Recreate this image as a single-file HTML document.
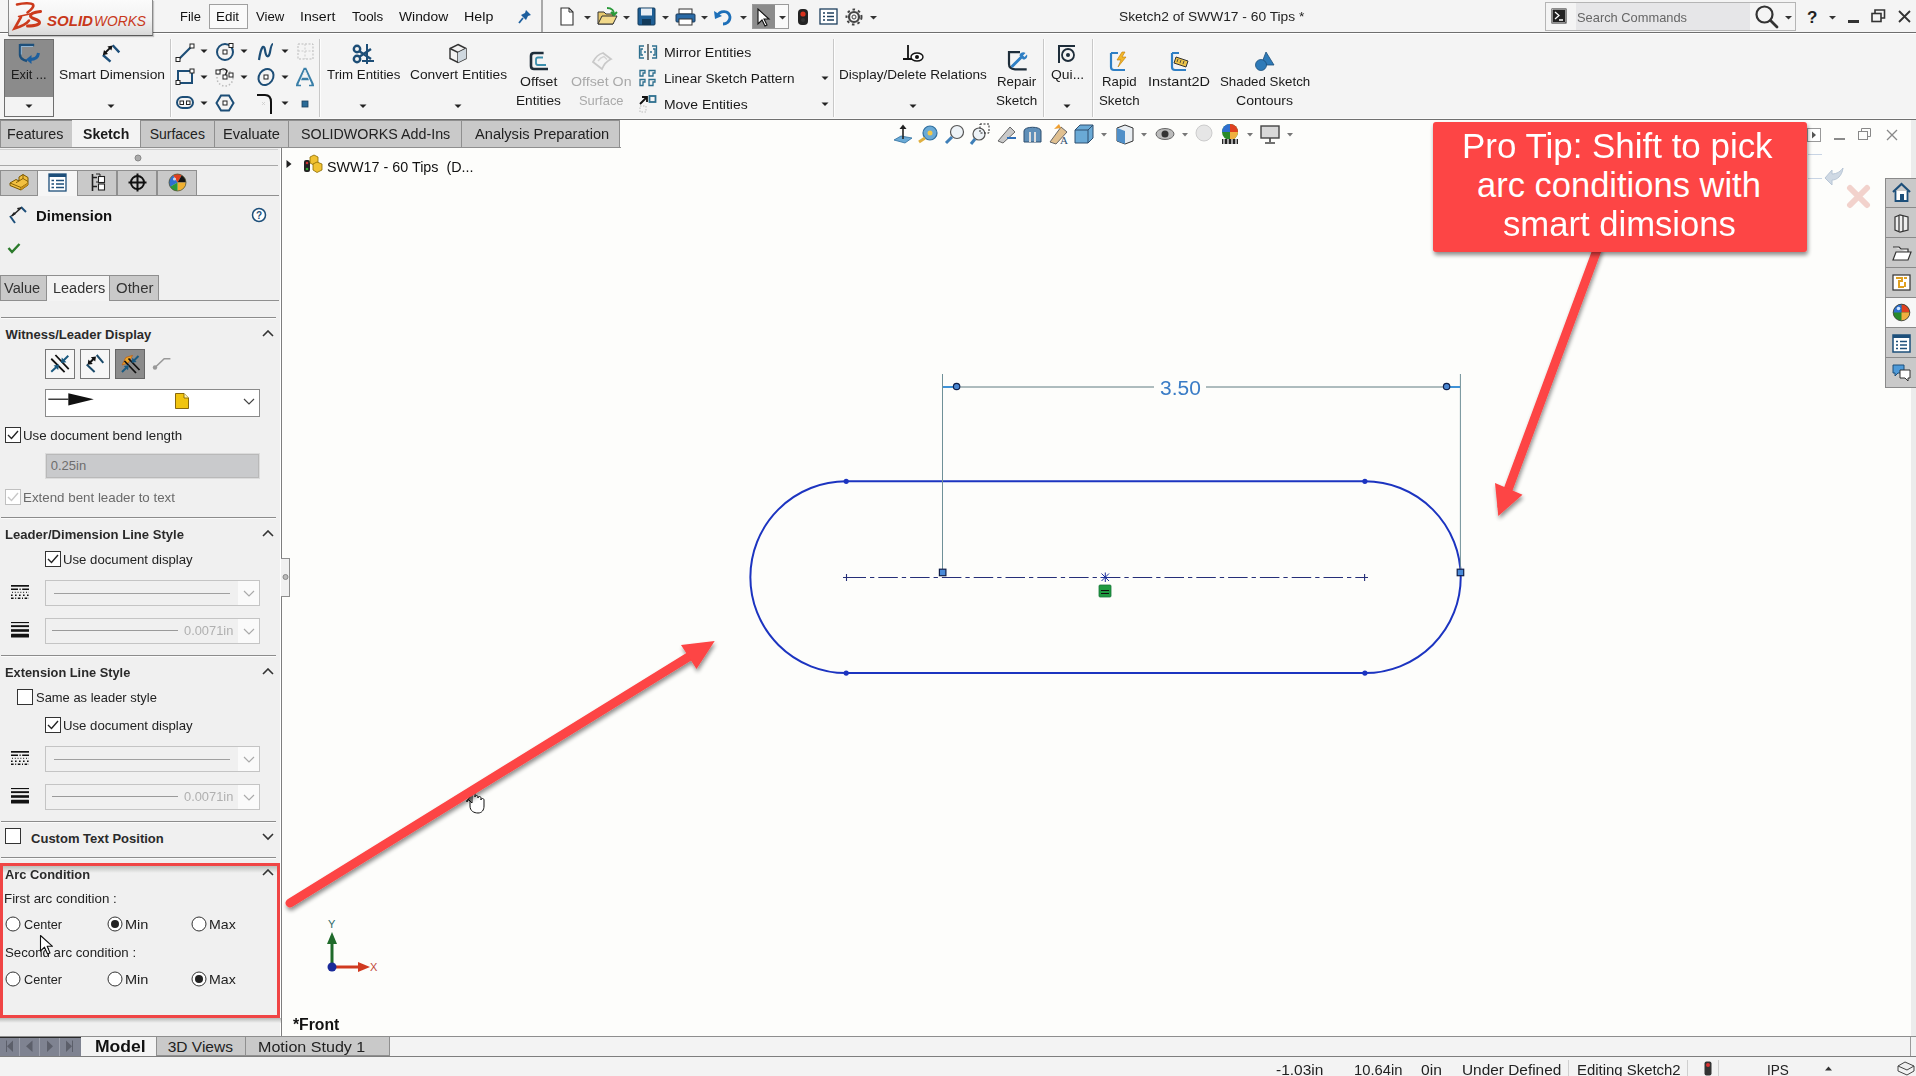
<!DOCTYPE html>
<html><head><meta charset="utf-8"><title>SOLIDWORKS</title>
<style>
html,body{margin:0;padding:0;width:1916px;height:1076px;overflow:hidden;background:#fdfdfb;}
body{position:relative;font-family:"Liberation Sans",sans-serif;}
.a{position:absolute;}
.t{position:absolute;white-space:nowrap;line-height:1;font-family:"Liberation Sans",sans-serif;}
</style></head><body>
<div class="a" style="left:0px;top:0px;width:1916px;height:32px;background:#f4f4f4"></div>
<div class="a" style="left:0px;top:32px;width:1916px;height:1px;background:#6e6e6e"></div>
<div class="a" style="left:0px;top:33px;width:1916px;height:87px;background:#f4f4f4"></div>
<div class="a" style="left:0px;top:33px;width:1916px;height:1px;background:#ffffff"></div>
<div class="a" style="left:0px;top:118px;width:1916px;height:1px;background:#fafafa"></div>
<div class="a" style="left:0px;top:119px;width:1916px;height:1px;background:#707070"></div>
<div class="a" style="left:8px;top:0px;width:145px;height:36px;background:linear-gradient(180deg,#fbfbfb 0%,#f2f2f2 55%,#d9d9d9 100%);border:1px solid #8a8a8a;border-bottom-color:#5a5a5a;border-top:none;box-sizing:border-box;box-shadow:1px 1px 1px rgba(0,0,0,0.2)"></div>
<div class="t" style="left:180.44px;top:10.4px;font-size:13.5px;font-weight:normal;color:#111;transform:scaleX(0.9577);transform-origin:0 0;">File</div>
<div class="t" style="left:256.45px;top:10.4px;font-size:13.5px;font-weight:normal;color:#111;transform:scaleX(0.9759);transform-origin:0 0;">View</div>
<div class="t" style="left:300.20px;top:10.4px;font-size:13.5px;font-weight:normal;color:#111;transform:scaleX(1.0454);transform-origin:0 0;">Insert</div>
<div class="t" style="left:352.21px;top:10.4px;font-size:13.5px;font-weight:normal;color:#111;transform:scaleX(0.9926);transform-origin:0 0;">Tools</div>
<div class="t" style="left:399.44px;top:10.4px;font-size:13.5px;font-weight:normal;color:#111;transform:scaleX(1.0252);transform-origin:0 0;">Window</div>
<div class="t" style="left:464.23px;top:10.4px;font-size:13.5px;font-weight:normal;color:#111;transform:scaleX(1.0571);transform-origin:0 0;">Help</div>
<div class="a" style="left:209px;top:4px;width:39px;height:25px;border:1px solid #a0a0a0;box-sizing:border-box;background:#fafafa"></div>
<div class="t" style="left:216.30px;top:10.4px;font-size:13.5px;font-weight:normal;color:#111;transform:scaleX(0.9928);transform-origin:0 0;">Edit</div>
<div class="a" style="left:541px;top:0px;width:2px;height:32px;background:#a9a9a9"></div>
<div class="t" style="left:1119.38px;top:10.2px;font-size:13.7px;font-weight:normal;color:#222;transform:scaleX(1.0069);transform-origin:0 0;">Sketch2 of SWW17 - 60 Tips *</div>
<div class="a" style="left:1545px;top:2px;width:251px;height:29px;border:1px solid #b5b5b5;box-sizing:border-box;background:#f4f4f4"></div>
<div class="a" style="left:1576px;top:3px;width:174px;height:27px;background:#e6e6e8"></div>
<div class="t" style="left:1577.42px;top:10.8px;font-size:13px;font-weight:normal;color:#666;transform:scaleX(0.9890);transform-origin:0 0;">Search Commands</div>
<div class="a" style="left:4px;top:39px;width:50px;height:78px;background:#f3f3f3;border:1px solid #6e6e6e;box-sizing:border-box"></div>
<div class="a" style="left:5px;top:40px;width:48px;height:57px;background:#8b8b8b"></div>
<svg class="a" style="left:15px;top:40px;" width="30" height="26" viewBox="0 0 30 26"><path d="M5 5 H19.2 M5 4 V15 C5 18 8 20 12 21" fill="none" stroke="#1d4f7a" stroke-width="2.4"/><path d="M6.2 6.5 H18 M6.3 6.5 V14.5" fill="none" stroke="#9cc3e6" stroke-width="0.8"/><path d="M23.5 13 C23 17 20 19.5 15 19.5" fill="none" stroke="#1d5f9e" stroke-width="3"/><path d="M11 19.5 L16.5 15 L16.5 24 Z" fill="#1d5f9e"/></svg>
<div class="t" style="left:11.45px;top:67.8px;font-size:13px;font-weight:normal;color:#1a1a1a;transform:scaleX(0.9833);transform-origin:0 0;">Exit ...</div>
<svg class="a" style="left:25px;top:104px;" width="8" height="5" viewBox="0 0 8 5"><path d="M0.5 0.5 L7.5 0.5 L4 4 Z" fill="#222"/></svg>
<svg class="a" style="left:95px;top:40px;" width="30" height="26" viewBox="0 0 30 26"><path d="M17.7 5.3 L24.3 12.4 M7.9 15 L15.5 21.7" stroke="#1d4f7a" stroke-width="2.4" fill="none"/><path d="M10 13 L15.6 7.4" stroke="#111" stroke-width="1.8"/><path d="M7.8 15.2 L9 10 L13 14 Z M17.6 5.4 L16.4 10.6 L12.4 6.6 Z" fill="#111"/></svg>
<div class="t" style="left:58.58px;top:68.0px;font-size:13px;font-weight:normal;color:#1a1a1a;transform:scaleX(1.0633);transform-origin:0 0;">Smart Dimension</div>
<svg class="a" style="left:107px;top:104px;" width="8" height="5" viewBox="0 0 8 5"><path d="M0.5 0.5 L7.5 0.5 L4 4 Z" fill="#222"/></svg>
<div class="a" style="left:170px;top:39px;width:1px;height:78px;background:#c8c8c8"></div>
<div class="a" style="left:171px;top:39px;width:1px;height:78px;background:#fdfdfd"></div>
<svg class="a" style="left:175px;top:43px;" width="20" height="20" viewBox="0 0 20 20"><path d="M3 17 L17 3" stroke="#1d4e77" stroke-width="2.2"/><rect x="1" y="14.5" width="4" height="4" fill="#fff" stroke="#222" stroke-width="1"/><rect x="15" y="1" width="4" height="4" fill="#fff" stroke="#222" stroke-width="1"/></svg>
<svg class="a" style="left:200px;top:49px;" width="8" height="5" viewBox="0 0 8 5"><path d="M0.5 0.5 L7.5 0.5 L4 4 Z" fill="#222"/></svg>
<svg class="a" style="left:215px;top:42px;" width="20" height="20" viewBox="0 0 20 20"><circle cx="10" cy="10" r="8" fill="none" stroke="#1d4e77" stroke-width="2"/><rect x="8" y="8" width="4" height="4" fill="#fff" stroke="#222"/><rect x="14" y="1.5" width="4" height="4" fill="#fff" stroke="#222"/></svg>
<svg class="a" style="left:240px;top:49px;" width="8" height="5" viewBox="0 0 8 5"><path d="M0.5 0.5 L7.5 0.5 L4 4 Z" fill="#222"/></svg>
<svg class="a" style="left:256px;top:42px;" width="20" height="20" viewBox="0 0 20 20"><path d="M3 18 C5 4 8 2 9 8 C10 16 13 16 14 10 C15 4 16 2 17 2" fill="none" stroke="#1d4e77" stroke-width="2.2"/></svg>
<svg class="a" style="left:280.5px;top:49px;" width="8" height="5" viewBox="0 0 8 5"><path d="M0.5 0.5 L7.5 0.5 L4 4 Z" fill="#222"/></svg>
<svg class="a" style="left:296px;top:42px;" width="19" height="19" viewBox="0 0 19 19"><rect x="2" y="2" width="15" height="15" fill="none" stroke="#bbb" stroke-width="1" stroke-dasharray="2 1.5"/><path d="M9 2 V17 M2 9 H17" stroke="#ccc" stroke-dasharray="2 1.5"/></svg>
<svg class="a" style="left:175px;top:67px;" width="20" height="20" viewBox="0 0 20 20"><rect x="3" y="4" width="14" height="12" fill="none" stroke="#1d4e77" stroke-width="2"/><rect x="1" y="13.5" width="4" height="4" fill="#fff" stroke="#222"/><rect x="15" y="2" width="4" height="4" fill="#fff" stroke="#222"/></svg>
<svg class="a" style="left:200px;top:75px;" width="8" height="5" viewBox="0 0 8 5"><path d="M0.5 0.5 L7.5 0.5 L4 4 Z" fill="#222"/></svg>
<svg class="a" style="left:215px;top:67px;" width="20" height="20" viewBox="0 0 20 20"><circle cx="10" cy="11" r="8" fill="none" stroke="#bbb" stroke-width="1.5" stroke-dasharray="1.5 2"/><path d="M3 5 C6 1 10 1 12 4 L10 9" fill="none" stroke="#222" stroke-width="1.4"/><rect x="1" y="3" width="4" height="4" fill="#fff" stroke="#222"/><rect x="8" y="8" width="4" height="4" fill="#fff" stroke="#222"/><rect x="14" y="6" width="4" height="4" fill="#fff" stroke="#222"/></svg>
<svg class="a" style="left:240px;top:75px;" width="8" height="5" viewBox="0 0 8 5"><path d="M0.5 0.5 L7.5 0.5 L4 4 Z" fill="#222"/></svg>
<svg class="a" style="left:256px;top:67px;" width="20" height="20" viewBox="0 0 20 20"><ellipse cx="10" cy="10" rx="7" ry="8.5" transform="rotate(35 10 10)" fill="none" stroke="#1d4e77" stroke-width="2"/><rect x="8" y="8" width="4" height="4" fill="#fff" stroke="#222"/></svg>
<svg class="a" style="left:280.5px;top:75px;" width="8" height="5" viewBox="0 0 8 5"><path d="M0.5 0.5 L7.5 0.5 L4 4 Z" fill="#222"/></svg>
<svg class="a" style="left:295px;top:66px;" width="20" height="21" viewBox="0 0 20 21"><path d="M10 2 L2 19 M10 2 L18 19 M5 13 H15" fill="none" stroke="#3a7fa8" stroke-width="2.4"/><path d="M10 4 L4 18 M10 4 L16 18" fill="none" stroke="#fff" stroke-width="0.8"/><path d="M1 19.5 H6 M14 19.5 H19" stroke="#3a7fa8" stroke-width="1.4"/></svg>
<svg class="a" style="left:175px;top:94px;" width="20" height="18" viewBox="0 0 20 18"><rect x="2" y="3" width="16" height="11" rx="5.5" fill="none" stroke="#1d4e77" stroke-width="2"/><rect x="5" y="7" width="3.5" height="3.5" fill="#fff" stroke="#222"/><rect x="11.5" y="7" width="3.5" height="3.5" fill="#fff" stroke="#222"/></svg>
<svg class="a" style="left:200px;top:101px;" width="8" height="5" viewBox="0 0 8 5"><path d="M0.5 0.5 L7.5 0.5 L4 4 Z" fill="#222"/></svg>
<svg class="a" style="left:215px;top:93px;" width="20" height="20" viewBox="0 0 20 20"><path d="M6 2.5 H14 L18.5 10 L14 17.5 H6 L1.5 10 Z" fill="none" stroke="#1d4e77" stroke-width="2"/><rect x="8" y="8" width="4" height="4" fill="#fff" stroke="#222"/></svg>
<svg class="a" style="left:256px;top:93px;" width="18" height="22" viewBox="0 0 18 22"><path d="M1 2 H9 C13 2 15 5 15 9 V21" fill="none" stroke="#111" stroke-width="2"/><path d="M6 9 L9 12 M9 9 L6 12" stroke="#ccc" stroke-width="0.8"/></svg>
<svg class="a" style="left:280.5px;top:101px;" width="8" height="5" viewBox="0 0 8 5"><path d="M0.5 0.5 L7.5 0.5 L4 4 Z" fill="#222"/></svg>
<svg class="a" style="left:301px;top:100px;" width="8" height="8" viewBox="0 0 8 8"><rect x="1" y="1" width="6" height="6" fill="#2a6a96" stroke="#1a3f5c" stroke-width="0.8"/></svg>
<div class="a" style="left:319px;top:39px;width:1px;height:78px;background:#c8c8c8"></div>
<div class="a" style="left:320px;top:39px;width:1px;height:78px;background:#fdfdfd"></div>
<svg class="a" style="left:351px;top:43px;" width="24" height="22" viewBox="0 0 24 22"><circle cx="6" cy="6" r="3.2" fill="none" stroke="#1d4e77" stroke-width="2.4"/><circle cx="6" cy="16" r="3.2" fill="none" stroke="#1d4e77" stroke-width="2.4"/><path d="M8 8 L20 16 M8 14 L20 6" stroke="#1d4e77" stroke-width="2.4"/><path d="M16 1 V21 M11 18 H23" stroke="#1d4e77" stroke-width="2"/></svg>
<div class="t" style="left:326.71px;top:68.3px;font-size:13px;font-weight:normal;color:#1a1a1a;transform:scaleX(1.0226);transform-origin:0 0;">Trim Entities</div>
<svg class="a" style="left:359px;top:104px;" width="8" height="5" viewBox="0 0 8 5"><path d="M0.5 0.5 L7.5 0.5 L4 4 Z" fill="#222"/></svg>
<svg class="a" style="left:448px;top:43px;" width="20" height="21" viewBox="0 0 20 21"><path d="M10 1.5 L18 5.5 V15.5 L10 19.5 L2 15.5 V5.5 Z" fill="#f2f2f2" stroke="#333" stroke-width="1.4"/><path d="M2 5.5 L10 9.5 L18 5.5 M10 9.5 V19.5" fill="none" stroke="#333" stroke-width="1.4"/><path d="M10 9.5 L18 5.5 V15.5 L10 19.5 Z" fill="#cfd8df"/></svg>
<div class="t" style="left:410.11px;top:68.3px;font-size:13px;font-weight:normal;color:#1a1a1a;transform:scaleX(1.0579);transform-origin:0 0;">Convert Entities</div>
<svg class="a" style="left:454px;top:104px;" width="8" height="5" viewBox="0 0 8 5"><path d="M0.5 0.5 L7.5 0.5 L4 4 Z" fill="#222"/></svg>
<svg class="a" style="left:528px;top:50px;" width="22" height="22" viewBox="0 0 22 22"><path d="M15.6 3 H6 Q3 3 3 6 V16 Q3 19 6 19 H20" fill="none" stroke="#1e2d3a" stroke-width="2.6"/><path d="M15 7.5 H10 Q8 7.5 8 9.5 V13 Q8 15 10 15 H18" fill="none" stroke="#3b8fae" stroke-width="1.8"/></svg>
<div class="t" style="left:519.74px;top:74.5px;font-size:13px;font-weight:normal;color:#1a1a1a;transform:scaleX(1.0845);transform-origin:0 0;">Offset</div>
<div class="t" style="left:516.48px;top:93.8px;font-size:13px;font-weight:normal;color:#1a1a1a;transform:scaleX(1.0513);transform-origin:0 0;">Entities</div>
<svg class="a" style="left:590px;top:50px;" width="24" height="22" viewBox="0 0 24 22"><path d="M3 12 C5 8 9 4 13 3 L21 9 C17 11 14 14 12 19 Z" fill="none" stroke="#c9c9c9" stroke-width="1.8"/><path d="M8 11 C10 8 12 7 14 6.5 L17 9.5" fill="none" stroke="#d4d4d4" stroke-width="1.4"/></svg>
<div class="t" style="left:570.83px;top:74.5px;font-size:13px;font-weight:normal;color:#a9a9a9;transform:scaleX(1.0936);transform-origin:0 0;">Offset On</div>
<div class="t" style="left:579.02px;top:93.8px;font-size:13px;font-weight:normal;color:#a9a9a9;transform:scaleX(0.9945);transform-origin:0 0;">Surface</div>
<svg class="a" style="left:638px;top:44px;" width="20" height="16" viewBox="0 0 20 16"><path d="M6 2 H1.5 V14 H6 M5 5 H3 V11 H5" fill="none" stroke="#2d6f8e" stroke-width="1.3"/><path d="M14 2 H18.5 V14 H14 M15 5 H17 V11 H15" fill="none" stroke="#2d6f8e" stroke-width="1.3"/><path d="M10 0 V16" stroke="#222" stroke-width="1.2"/><path d="M6 8 H8 M12 8 H14" stroke="#2d6f8e" stroke-width="1.3"/></svg>
<div class="t" style="left:663.84px;top:45.9px;font-size:13px;font-weight:normal;color:#1a1a1a;transform:scaleX(1.0884);transform-origin:0 0;">Mirror Entities</div>
<svg class="a" style="left:638px;top:69px;" width="20" height="18" viewBox="0 0 20 18"><path d="M2 1.5 H7 V4 H5 V7 H2 Z M11 1.5 H17 V4 H15 V7 H11 Z M2 10.5 H7 V13 H5 V16.5 H2 Z M11 10.5 H17 V13 H15 V16.5 H11 Z" fill="none" stroke="#2d6f8e" stroke-width="1.3"/></svg>
<div class="t" style="left:663.89px;top:72.0px;font-size:13px;font-weight:normal;color:#1a1a1a;transform:scaleX(1.0437);transform-origin:0 0;">Linear Sketch Pattern</div>
<svg class="a" style="left:821px;top:75.5px;" width="8" height="5" viewBox="0 0 8 5"><path d="M0.5 0.5 L7.5 0.5 L4 4 Z" fill="#222"/></svg>
<svg class="a" style="left:638px;top:94px;" width="20" height="20" viewBox="0 0 20 20"><path d="M2 10 L8 4 M4 3 H9 V8" fill="none" stroke="#111" stroke-width="1.8"/><rect x="11.5" y="2" width="6" height="6" fill="none" stroke="#2d6f8e" stroke-width="1.8"/><rect x="2" y="12" width="6" height="6" fill="none" stroke="#bbb" stroke-width="1" stroke-dasharray="1.5 1.5"/></svg>
<div class="t" style="left:663.86px;top:97.6px;font-size:13px;font-weight:normal;color:#1a1a1a;transform:scaleX(1.0720);transform-origin:0 0;">Move Entities</div>
<svg class="a" style="left:821px;top:101.5px;" width="8" height="5" viewBox="0 0 8 5"><path d="M0.5 0.5 L7.5 0.5 L4 4 Z" fill="#222"/></svg>
<div class="a" style="left:833px;top:39px;width:1px;height:78px;background:#c8c8c8"></div>
<div class="a" style="left:834px;top:39px;width:1px;height:78px;background:#fdfdfd"></div>
<svg class="a" style="left:902px;top:44px;" width="22" height="20" viewBox="0 0 22 20"><path d="M6 1 V15 M1 15 H11" stroke="#111" stroke-width="1.8"/><ellipse cx="15" cy="13" rx="6" ry="4" fill="#fff" stroke="#111" stroke-width="1.4"/><circle cx="15" cy="13" r="2" fill="#111"/></svg>
<div class="t" style="left:839.29px;top:68.0px;font-size:13px;font-weight:normal;color:#1a1a1a;transform:scaleX(1.0436);transform-origin:0 0;">Display/Delete Relations</div>
<svg class="a" style="left:909px;top:104px;" width="8" height="5" viewBox="0 0 8 5"><path d="M0.5 0.5 L7.5 0.5 L4 4 Z" fill="#222"/></svg>
<svg class="a" style="left:1006px;top:50px;" width="22" height="22" viewBox="0 0 22 22"><path d="M14 2.2 H3 V14 Q3 19 9 19.3 H20.7" fill="none" stroke="#1e2d3a" stroke-width="2.2"/><path d="M6.5 16 L15.5 7" stroke="#2f7fc4" stroke-width="3" stroke-linecap="round"/><path d="M13.5 5.5 C14 2.5 17.5 1.5 19.5 3 L17 5.5 L18.5 7 L21 4.5 C22 7 20 10 17 9.5 Z" fill="#2f7fc4"/></svg>
<div class="t" style="left:997.21px;top:75.0px;font-size:13px;font-weight:normal;color:#1a1a1a;transform:scaleX(1.0237);transform-origin:0 0;">Repair</div>
<div class="t" style="left:996.39px;top:94.0px;font-size:13px;font-weight:normal;color:#1a1a1a;transform:scaleX(1.0359);transform-origin:0 0;">Sketch</div>
<div class="a" style="left:1043px;top:39px;width:1px;height:78px;background:#c8c8c8"></div>
<div class="a" style="left:1044px;top:39px;width:1px;height:78px;background:#fdfdfd"></div>
<svg class="a" style="left:1057px;top:44px;" width="20" height="20" viewBox="0 0 20 20"><path d="M2 19 V2 H18" fill="none" stroke="#1e2d3a" stroke-width="2"/><circle cx="11" cy="11" r="6" fill="none" stroke="#1e2d3a" stroke-width="1.8"/><circle cx="11" cy="11" r="2" fill="#1e2d3a"/></svg>
<div class="t" style="left:1051.15px;top:68.0px;font-size:13px;font-weight:normal;color:#1a1a1a;transform:scaleX(1.0691);transform-origin:0 0;">Qui...</div>
<svg class="a" style="left:1063px;top:104px;" width="8" height="5" viewBox="0 0 8 5"><path d="M0.5 0.5 L7.5 0.5 L4 4 Z" fill="#222"/></svg>
<div class="a" style="left:1092px;top:39px;width:1px;height:78px;background:#c8c8c8"></div>
<div class="a" style="left:1093px;top:39px;width:1px;height:78px;background:#fdfdfd"></div>
<svg class="a" style="left:1108px;top:50px;" width="22" height="22" viewBox="0 0 22 22"><path d="M3 3 V17 C3 19 4 20 6 20 H17" fill="none" stroke="#2f7fc4" stroke-width="2.2"/><path d="M3 3 H10" stroke="#2f7fc4" stroke-width="2"/><path d="M14 2 L9 10 H13 L10 17 L18 7 H14 L17 2 Z" fill="#f2b72b" stroke="#c07a00" stroke-width="0.6"/></svg>
<div class="t" style="left:1101.62px;top:75.0px;font-size:13px;font-weight:normal;color:#1a1a1a;transform:scaleX(1.0165);transform-origin:0 0;">Rapid</div>
<div class="t" style="left:1098.70px;top:94.0px;font-size:13px;font-weight:normal;color:#1a1a1a;transform:scaleX(1.0229);transform-origin:0 0;">Sketch</div>
<svg class="a" style="left:1169px;top:50px;" width="22" height="22" viewBox="0 0 22 22"><path d="M3 3 V17 C3 19 4 20 6 20 H17" fill="none" stroke="#2f7fc4" stroke-width="2.2"/><path d="M3 3 H10" stroke="#2f7fc4" stroke-width="2"/><path d="M7 7 L19 11 L17 17 L5 13 Z" fill="#e9c24a" stroke="#333" stroke-width="1"/><path d="M9 9 L8 12 M12 10 L11 13 M15 11 L14 14" stroke="#333" stroke-width="0.8"/></svg>
<div class="t" style="left:1148.37px;top:75.0px;font-size:13px;font-weight:normal;color:#1a1a1a;transform:scaleX(1.1146);transform-origin:0 0;">Instant2D</div>
<svg class="a" style="left:1253px;top:50px;" width="22" height="22" viewBox="0 0 22 22"><path d="M13 2 L21 15 H8 Z" fill="#2e7ab8" stroke="#1d4f7a" stroke-width="0.8"/><circle cx="8" cy="15" r="5.5" fill="#2e7ab8" stroke="#1d4f7a" stroke-width="0.8"/></svg>
<div class="t" style="left:1219.50px;top:75.0px;font-size:13px;font-weight:normal;color:#1a1a1a;transform:scaleX(1.0235);transform-origin:0 0;">Shaded Sketch</div>
<div class="t" style="left:1235.90px;top:94.0px;font-size:13px;font-weight:normal;color:#1a1a1a;transform:scaleX(1.0806);transform-origin:0 0;">Contours</div>
<div class="a" style="left:0px;top:120px;width:281px;height:28px;background:#f0f0f0"></div>
<div class="a" style="left:0px;top:120px;width:73px;height:28px;background:#c9c9c9;border:1px solid #8f8f8f;box-sizing:border-box;"></div>
<div class="t" style="left:7.13px;top:127.0px;font-size:14px;font-weight:normal;color:#222;transform:scaleX(1.0207);transform-origin:0 0;">Features</div>
<div class="a" style="left:72px;top:120px;width:68px;height:28px;background:#f3f3f3"></div>
<div class="t" style="left:83.10px;top:127.0px;font-size:14px;font-weight:bold;color:#1a1a1a;transform:scaleX(1.0079);transform-origin:0 0;">Sketch</div>
<div class="a" style="left:140px;top:120px;width:75px;height:28px;background:#c9c9c9;border:1px solid #8f8f8f;box-sizing:border-box;"></div>
<div class="t" style="left:149.67px;top:127.0px;font-size:14px;font-weight:normal;color:#222;">Surfaces</div>
<div class="a" style="left:214px;top:120px;width:75px;height:28px;background:#c9c9c9;border:1px solid #8f8f8f;box-sizing:border-box;"></div>
<div class="t" style="left:223.30px;top:127.0px;font-size:14px;font-weight:normal;color:#222;transform:scaleX(1.0453);transform-origin:0 0;">Evaluate</div>
<div class="a" style="left:288px;top:120px;width:174px;height:28px;background:#c9c9c9;border:1px solid #8f8f8f;box-sizing:border-box;"></div>
<div class="t" style="left:300.66px;top:127.0px;font-size:14px;font-weight:normal;color:#222;transform:scaleX(1.0204);transform-origin:0 0;">SOLIDWORKS Add-Ins</div>
<div class="a" style="left:461px;top:120px;width:159px;height:28px;background:#c9c9c9;border:1px solid #8f8f8f;box-sizing:border-box;"></div>
<div class="t" style="left:474.67px;top:127.0px;font-size:14px;font-weight:normal;color:#222;transform:scaleX(1.0450);transform-origin:0 0;">Analysis Preparation</div>
<div class="a" style="left:0px;top:147px;width:281px;height:1px;background:#8f8f8f"></div>
<div class="a" style="left:140px;top:147px;width:481px;height:1px;background:#8f8f8f"></div>
<div class="a" style="left:0px;top:148px;width:281px;height:888px;background:#f0f0f0"></div>
<div class="a" style="left:281px;top:148px;width:1px;height:888px;background:#7e7e7e"></div>
<div class="a" style="left:280px;top:148px;width:1px;height:888px;background:#ffffff"></div>
<div class="a" style="left:281px;top:558px;width:9px;height:39px;background:#f0f0f0;border:1px solid #8e8e8e;border-left:none;box-sizing:border-box"></div>
<svg class="a" style="left:282px;top:573px;" width="7" height="8" viewBox="0 0 7 8"><circle cx="3.5" cy="4" r="2.5" fill="#bbb" stroke="#888" stroke-width="1"/></svg>
<div class="a" style="left:0px;top:149px;width:278px;height:1px;background:#d0d0d0"></div>
<svg class="a" style="left:134px;top:154px;" width="8" height="8" viewBox="0 0 8 8"><circle cx="4" cy="4" r="3" fill="#aaa" stroke="#888" stroke-width="1"/></svg>
<div class="a" style="left:0px;top:165px;width:278px;height:1px;background:#a8a8a8"></div>
<div class="a" style="left:0px;top:170px;width:38px;height:26px;background:#c9c9c9;border:1px solid #8f8f8f;box-sizing:border-box"></div>
<div class="a" style="left:37px;top:170px;width:41px;height:26px;background:#f6f6f6;border:1px solid #8f8f8f;border-bottom:none;box-sizing:border-box"></div>
<div class="a" style="left:77px;top:170px;width:40px;height:26px;background:#c9c9c9;border:1px solid #8f8f8f;box-sizing:border-box"></div>
<div class="a" style="left:117px;top:170px;width:40px;height:26px;background:#c9c9c9;border:1px solid #8f8f8f;box-sizing:border-box"></div>
<div class="a" style="left:157px;top:170px;width:40px;height:26px;background:#c9c9c9;border:1px solid #8f8f8f;box-sizing:border-box"></div>
<div class="a" style="left:0px;top:195px;width:38px;height:1px;background:#8f8f8f"></div>
<div class="a" style="left:197px;top:195px;width:82px;height:1px;background:#8f8f8f"></div>
<svg class="a" style="left:8px;top:205px;" width="20" height="20" viewBox="0 0 20 20"><path d="M2 11 L7 18" stroke="#1d4f7a" stroke-width="2" fill="none"/><path d="M13 2 L18 7" stroke="#1d4f7a" stroke-width="2" fill="none"/><path d="M4 11 L13 3" stroke="#222" stroke-width="1.5"/><path d="M2 12 L8 9 L6 7 Z M14 2 L10 5 L9 3 Z" fill="#222"/></svg>
<div class="t" style="left:35.62px;top:208.7px;font-size:14.5px;font-weight:bold;color:#111;transform:scaleX(1.0281);transform-origin:0 0;">Dimension</div>
<svg class="a" style="left:251px;top:207px;" width="16" height="16" viewBox="0 0 16 16"><circle cx="8" cy="8" r="6.5" fill="#fff" stroke="#1d4f7a" stroke-width="1.5"/><text x="8" y="12" font-size="10" font-weight="bold" text-anchor="middle" fill="#1d4f7a" font-family="Liberation Sans">?</text></svg>
<svg class="a" style="left:7px;top:242px;" width="14" height="12" viewBox="0 0 14 12"><path d="M1.5 6 L5 10 L12.5 2" fill="none" stroke="#2b7a2b" stroke-width="2.4"/></svg>
<div class="a" style="left:0px;top:275px;width:47px;height:26px;background:#c9c9c9;border:1px solid #8f8f8f;box-sizing:border-box"></div>
<div class="a" style="left:46px;top:275px;width:64px;height:26px;background:#f3f3f3;border:1px solid #8f8f8f;border-bottom:none;box-sizing:border-box"></div>
<div class="a" style="left:109px;top:275px;width:50px;height:26px;background:#c9c9c9;border:1px solid #8f8f8f;box-sizing:border-box"></div>
<div class="t" style="left:3.94px;top:280.9px;font-size:14px;font-weight:normal;color:#333;transform:scaleX(1.0414);transform-origin:0 0;">Value</div>
<div class="t" style="left:52.51px;top:280.9px;font-size:14px;font-weight:normal;color:#333;transform:scaleX(1.0338);transform-origin:0 0;">Leaders</div>
<div class="t" style="left:115.70px;top:280.9px;font-size:14px;font-weight:normal;color:#333;transform:scaleX(1.0694);transform-origin:0 0;">Other</div>
<div class="a" style="left:158px;top:300px;width:121px;height:1px;background:#8f8f8f"></div>
<div class="a" style="left:1px;top:317px;width:275px;height:1px;background:#8c8c8c"></div>
<div class="a" style="left:1px;top:318px;width:275px;height:1px;background:#fbfbfb"></div>
<div class="t" style="left:5.49px;top:327.7px;font-size:13px;font-weight:bold;color:#2a2a2a;">Witness/Leader Display</div>
<svg class="a" style="left:262px;top:330px;" width="12" height="8" viewBox="0 0 12 8"><path d="M1 6 L6 1 L11 6" fill="none" stroke="#333" stroke-width="1.6"/></svg>
<div class="a" style="left:45px;top:349px;width:30px;height:30px;background:#f6f6f6;border:1px solid #777;box-sizing:border-box"></div>
<div class="a" style="left:80px;top:349px;width:30px;height:30px;background:#f6f6f6;border:1px solid #777;box-sizing:border-box"></div>
<div class="a" style="left:115px;top:349px;width:30px;height:30px;background:#8b8b8b;border:1px solid #666;box-sizing:border-box"></div>
<svg class="a" style="left:45px;top:349px;" width="30" height="30" viewBox="0 0 30 30"><path d="M6.25 9.75 L19.6 23.1 M10.4 6 L23.75 20.2" stroke="#111" stroke-width="1.8"/><path d="M23.3 6.8 L18 12 M6.25 22.7 L12 17.4" stroke="#1a5a80" stroke-width="2"/><path d="M16 14 L16.8 8.6 L21.4 13.2 Z M14 15.6 L13.2 21 L8.6 16.4 Z" fill="#1a5a80"/></svg>
<svg class="a" style="left:80px;top:349px;" width="30" height="30" viewBox="0 0 30 30"><path d="M16.7 6 L23.3 13.9 M6.7 15.6 L14.6 23.1" stroke="#1a4a6a" stroke-width="2" fill="none"/><path d="M10 13.5 L13.7 9.8" stroke="#111" stroke-width="2"/><path d="M7.6 15.8 L8.4 10.6 L12.8 15 Z M16 7.4 L15.2 12.6 L10.8 8.2 Z" fill="#111"/></svg>
<svg class="a" style="left:115px;top:349px;" width="30" height="30" viewBox="0 0 30 30"><path d="M7.1 16 L10.8 8.5 L17.5 6.4 L13.3 13.9 Z" fill="#f0a828" stroke="#c06010" stroke-width="0.8"/><path d="M9.5 12 L21 24 M13.5 9.5 L24.5 21" stroke="#111" stroke-width="1.8"/><path d="M23.5 7 L18.5 12 M7 23 L12 18" stroke="#1a5a80" stroke-width="2"/><path d="M16.6 13.8 L17.4 8.8 L21.6 13 Z M13.8 16.2 L13 21.2 L8.8 17 Z" fill="#1a5a80"/></svg>
<svg class="a" style="left:150px;top:354px;" width="24" height="18" viewBox="0 0 24 18"><path d="M5 13.5 L14.2 4.75 H20.4" fill="none" stroke="#999" stroke-width="1.6"/><circle cx="5" cy="13.5" r="2.2" fill="#999"/></svg>
<div class="a" style="left:45px;top:389px;width:215px;height:28px;background:#fff;border:1px solid #8a8a8a;box-sizing:border-box"></div>
<svg class="a" style="left:46px;top:391px;" width="50" height="16" viewBox="0 0 50 16"><path d="M2.3 8.2 H22.5" stroke="#111" stroke-width="1.2"/><path d="M22.3 2.3 L47.8 8.2 L22.3 14.4 Z" fill="#111"/></svg>
<svg class="a" style="left:174px;top:393px;" width="16" height="16" viewBox="0 0 16 16"><path d="M1.5 0.5 H10 L14.5 5 V15.5 H1.5 Z" fill="#f1c40f" stroke="#7a5a00" stroke-width="0.9"/><path d="M10 0.5 V5 H14.5" fill="#fff6b0" stroke="#7a5a00" stroke-width="0.8"/></svg>
<svg class="a" style="left:243px;top:398px;" width="12" height="8" viewBox="0 0 12 8"><path d="M1 1 L6 6 L11 1" fill="none" stroke="#444" stroke-width="1.2"/></svg>
<svg class="a" style="left:5px;top:427px;" width="16" height="16" viewBox="0 0 16 16"><rect x="0.5" y="0.5" width="15" height="15" fill="#fff" stroke="#333" stroke-width="1"/><path d="M3 8 L6.5 11.5 L13 4" fill="none" stroke="#222" stroke-width="1.4"/></svg>
<div class="t" style="left:23.48px;top:428.8px;font-size:13px;font-weight:normal;color:#222;transform:scaleX(1.0237);transform-origin:0 0;">Use document bend length</div>
<div class="a" style="left:45px;top:453px;width:215px;height:26px;background:#c9cacc;border:1px solid #dcdcdc;box-sizing:border-box;box-shadow:inset 0 0 0 1px #b9b9b9"></div>
<div class="t" style="left:50.79px;top:459.0px;font-size:13px;font-weight:normal;color:#6d6d6d;">0.25in</div>
<svg class="a" style="left:5px;top:489px;" width="16" height="16" viewBox="0 0 16 16"><rect x="0.5" y="0.5" width="15" height="15" fill="#fff" stroke="#c0c0c0" stroke-width="1"/><path d="M3 8 L6.5 11.5 L13 4" fill="none" stroke="#c8c8c8" stroke-width="1.4"/></svg>
<div class="t" style="left:23.41px;top:491.0px;font-size:13px;font-weight:normal;color:#6a6a6a;transform:scaleX(1.0258);transform-origin:0 0;">Extend bent leader to text</div>
<div class="a" style="left:1px;top:517px;width:275px;height:1px;background:#8c8c8c"></div>
<div class="a" style="left:1px;top:518px;width:275px;height:1px;background:#fbfbfb"></div>
<div class="t" style="left:4.64px;top:527.9px;font-size:13px;font-weight:bold;color:#2a2a2a;transform:scaleX(1.0073);transform-origin:0 0;">Leader/Dimension Line Style</div>
<svg class="a" style="left:262px;top:530px;" width="12" height="8" viewBox="0 0 12 8"><path d="M1 6 L6 1 L11 6" fill="none" stroke="#333" stroke-width="1.6"/></svg>
<svg class="a" style="left:45px;top:551px;" width="16" height="16" viewBox="0 0 16 16"><rect x="0.5" y="0.5" width="15" height="15" fill="#fff" stroke="#333" stroke-width="1"/><path d="M3 8 L6.5 11.5 L13 4" fill="none" stroke="#222" stroke-width="1.4"/></svg>
<div class="t" style="left:63.39px;top:553.0px;font-size:13px;font-weight:normal;color:#222;transform:scaleX(1.0137);transform-origin:0 0;">Use document display</div>
<svg class="a" style="left:11px;top:585px;" width="19" height="15" viewBox="0 0 19 15"><rect x="0" y="0" width="18" height="1.7" fill="#111"/><path d="M0 4.3 H18" stroke="#111" stroke-width="1.6" stroke-dasharray="7 1.5 1.2 1.5"/><path d="M1 7.3 H18" stroke="#222" stroke-width="1.2" stroke-dasharray="0.9 1.9"/><path d="M0 10.3 H18" stroke="#111" stroke-width="1.6" stroke-dasharray="1.6 2.4"/><path d="M0 13.3 H18" stroke="#111" stroke-width="1.6" stroke-dasharray="2.6 1.6 1 1.6"/></svg>
<div class="a" style="left:45px;top:580px;width:215px;height:26px;background:#f0f0f0;border:1px solid #c4c4c4;box-sizing:border-box"></div>
<div class="a" style="left:238px;top:581px;width:21px;height:24px;background:#fafafa"></div>
<div class="a" style="left:54px;top:593px;width:176px;height:1px;background:#a0a0a0"></div>
<svg class="a" style="left:243px;top:590px;" width="12" height="8" viewBox="0 0 12 8"><path d="M1 1 L6 6 L11 1" fill="none" stroke="#aaa" stroke-width="1.2"/></svg>
<svg class="a" style="left:11px;top:622px;" width="19" height="16" viewBox="0 0 19 16"><rect x="0" y="0" width="18" height="1.1" fill="#111"/><rect x="0" y="3.2" width="18" height="1.9" fill="#111"/><rect x="0" y="7.2" width="18" height="2.6" fill="#111"/><rect x="0" y="11.8" width="18" height="3.6" rx="0.5" fill="#111"/></svg>
<div class="a" style="left:45px;top:618px;width:215px;height:26px;background:#f0f0f0;border:1px solid #c4c4c4;box-sizing:border-box"></div>
<div class="a" style="left:238px;top:619px;width:21px;height:24px;background:#fafafa"></div>
<div class="a" style="left:52px;top:630px;width:126px;height:1px;background:#9a9a9a"></div>
<div class="t" style="left:183.50px;top:625.4px;font-size:12.5px;font-weight:normal;color:#b0b0b0;transform:scaleX(1.0284);transform-origin:0 0;">0.0071in</div>
<svg class="a" style="left:243px;top:628px;" width="12" height="8" viewBox="0 0 12 8"><path d="M1 1 L6 6 L11 1" fill="none" stroke="#aaa" stroke-width="1.2"/></svg>
<div class="a" style="left:1px;top:655px;width:275px;height:1px;background:#8c8c8c"></div>
<div class="a" style="left:1px;top:656px;width:275px;height:1px;background:#fbfbfb"></div>
<div class="t" style="left:4.65px;top:666.0px;font-size:13px;font-weight:bold;color:#2a2a2a;transform:scaleX(0.9854);transform-origin:0 0;">Extension Line Style</div>
<svg class="a" style="left:262px;top:668px;" width="12" height="8" viewBox="0 0 12 8"><path d="M1 6 L6 1 L11 6" fill="none" stroke="#333" stroke-width="1.6"/></svg>
<svg class="a" style="left:17px;top:689px;" width="16" height="16" viewBox="0 0 16 16"><rect x="0.5" y="0.5" width="15" height="15" fill="#fff" stroke="#333" stroke-width="1"/></svg>
<div class="t" style="left:35.72px;top:691.0px;font-size:13px;font-weight:normal;color:#222;transform:scaleX(0.9955);transform-origin:0 0;">Same as leader style</div>
<svg class="a" style="left:45px;top:717px;" width="16" height="16" viewBox="0 0 16 16"><rect x="0.5" y="0.5" width="15" height="15" fill="#fff" stroke="#333" stroke-width="1"/><path d="M3 8 L6.5 11.5 L13 4" fill="none" stroke="#222" stroke-width="1.4"/></svg>
<div class="t" style="left:63.39px;top:719.0px;font-size:13px;font-weight:normal;color:#222;transform:scaleX(1.0137);transform-origin:0 0;">Use document display</div>
<svg class="a" style="left:11px;top:751px;" width="19" height="15" viewBox="0 0 19 15"><rect x="0" y="0" width="18" height="1.7" fill="#111"/><path d="M0 4.3 H18" stroke="#111" stroke-width="1.6" stroke-dasharray="7 1.5 1.2 1.5"/><path d="M1 7.3 H18" stroke="#222" stroke-width="1.2" stroke-dasharray="0.9 1.9"/><path d="M0 10.3 H18" stroke="#111" stroke-width="1.6" stroke-dasharray="1.6 2.4"/><path d="M0 13.3 H18" stroke="#111" stroke-width="1.6" stroke-dasharray="2.6 1.6 1 1.6"/></svg>
<div class="a" style="left:45px;top:746px;width:215px;height:26px;background:#f0f0f0;border:1px solid #c4c4c4;box-sizing:border-box"></div>
<div class="a" style="left:238px;top:747px;width:21px;height:24px;background:#fafafa"></div>
<div class="a" style="left:54px;top:759px;width:176px;height:1px;background:#a0a0a0"></div>
<svg class="a" style="left:243px;top:756px;" width="12" height="8" viewBox="0 0 12 8"><path d="M1 1 L6 6 L11 1" fill="none" stroke="#aaa" stroke-width="1.2"/></svg>
<svg class="a" style="left:11px;top:788px;" width="19" height="16" viewBox="0 0 19 16"><rect x="0" y="0" width="18" height="1.1" fill="#111"/><rect x="0" y="3.2" width="18" height="1.9" fill="#111"/><rect x="0" y="7.2" width="18" height="2.6" fill="#111"/><rect x="0" y="11.8" width="18" height="3.6" rx="0.5" fill="#111"/></svg>
<div class="a" style="left:45px;top:784px;width:215px;height:26px;background:#f0f0f0;border:1px solid #c4c4c4;box-sizing:border-box"></div>
<div class="a" style="left:238px;top:785px;width:21px;height:24px;background:#fafafa"></div>
<div class="a" style="left:52px;top:796px;width:126px;height:1px;background:#9a9a9a"></div>
<div class="t" style="left:183.50px;top:791.4px;font-size:12.5px;font-weight:normal;color:#b0b0b0;transform:scaleX(1.0284);transform-origin:0 0;">0.0071in</div>
<svg class="a" style="left:243px;top:794px;" width="12" height="8" viewBox="0 0 12 8"><path d="M1 1 L6 6 L11 1" fill="none" stroke="#aaa" stroke-width="1.2"/></svg>
<div class="a" style="left:1px;top:821px;width:275px;height:1px;background:#8c8c8c"></div>
<div class="a" style="left:1px;top:822px;width:275px;height:1px;background:#fbfbfb"></div>
<svg class="a" style="left:5px;top:828px;" width="16" height="16" viewBox="0 0 16 16"><rect x="0.5" y="0.5" width="15" height="15" fill="#fff" stroke="#333" stroke-width="1"/></svg>
<div class="t" style="left:31.07px;top:832.0px;font-size:13px;font-weight:bold;color:#2a2a2a;">Custom Text Position</div>
<svg class="a" style="left:262px;top:833px;" width="12" height="8" viewBox="0 0 12 8"><path d="M1 1 L6 6 L11 1" fill="none" stroke="#333" stroke-width="1.6"/></svg>
<div class="a" style="left:1px;top:857px;width:275px;height:1px;background:#8c8c8c"></div>
<div class="a" style="left:1px;top:858px;width:275px;height:1px;background:#fbfbfb"></div>
<div class="a" style="left:0px;top:866px;width:277px;height:152px;background:#f0f0f0"></div>
<div class="a" style="left:0px;top:1018px;width:281px;height:5px;background:linear-gradient(#b8bab8,#e6e6e6 80%,#f0f0f0)"></div>
<div class="a" style="left:3px;top:866px;width:274px;height:7px;background:linear-gradient(#bcc0bc,#f0f0f0)"></div>
<div class="a" style="left:0px;top:863px;width:280px;height:155px;border:3px solid #f04545;box-sizing:border-box"></div>
<div class="t" style="left:5.19px;top:867.8px;font-size:13px;font-weight:bold;color:#2a2a2a;transform:scaleX(0.9903);transform-origin:0 0;">Arc Condition</div>
<svg class="a" style="left:262px;top:869px;" width="12" height="8" viewBox="0 0 12 8"><path d="M1 6 L6 1 L11 6" fill="none" stroke="#333" stroke-width="1.6"/></svg>
<div class="t" style="left:4.40px;top:892.0px;font-size:13px;font-weight:normal;color:#222;transform:scaleX(1.0273);transform-origin:0 0;">First arc condition :</div>
<svg class="a" style="left:5px;top:916px;" width="16" height="16" viewBox="0 0 16 16"><circle cx="8" cy="8" r="7" fill="#fff" stroke="#333" stroke-width="1"/></svg>
<div class="t" style="left:23.87px;top:918.0px;font-size:13px;font-weight:normal;color:#222;transform:scaleX(0.9750);transform-origin:0 0;">Center</div>
<svg class="a" style="left:107px;top:916px;" width="16" height="16" viewBox="0 0 16 16"><circle cx="8" cy="8" r="7" fill="#fff" stroke="#333" stroke-width="1"/><circle cx="8" cy="8" r="4" fill="#222"/></svg>
<div class="t" style="left:125.21px;top:918.0px;font-size:13px;font-weight:normal;color:#222;transform:scaleX(1.1184);transform-origin:0 0;">Min</div>
<svg class="a" style="left:191px;top:916px;" width="16" height="16" viewBox="0 0 16 16"><circle cx="8" cy="8" r="7" fill="#fff" stroke="#333" stroke-width="1"/></svg>
<div class="t" style="left:208.84px;top:918.0px;font-size:13px;font-weight:normal;color:#222;transform:scaleX(1.0873);transform-origin:0 0;">Max</div>
<div class="t" style="left:4.90px;top:946.4px;font-size:13px;font-weight:normal;color:#222;transform:scaleX(1.0192);transform-origin:0 0;">Second arc condition :</div>
<svg class="a" style="left:5px;top:971px;" width="16" height="16" viewBox="0 0 16 16"><circle cx="8" cy="8" r="7" fill="#fff" stroke="#333" stroke-width="1"/></svg>
<div class="t" style="left:23.87px;top:973.0px;font-size:13px;font-weight:normal;color:#222;transform:scaleX(0.9750);transform-origin:0 0;">Center</div>
<svg class="a" style="left:107px;top:971px;" width="16" height="16" viewBox="0 0 16 16"><circle cx="8" cy="8" r="7" fill="#fff" stroke="#333" stroke-width="1"/></svg>
<div class="t" style="left:125.21px;top:973.0px;font-size:13px;font-weight:normal;color:#222;transform:scaleX(1.1184);transform-origin:0 0;">Min</div>
<svg class="a" style="left:191px;top:971px;" width="16" height="16" viewBox="0 0 16 16"><circle cx="8" cy="8" r="7" fill="#fff" stroke="#333" stroke-width="1"/><circle cx="8" cy="8" r="4" fill="#222"/></svg>
<div class="t" style="left:208.84px;top:973.0px;font-size:13px;font-weight:normal;color:#222;transform:scaleX(1.0873);transform-origin:0 0;">Max</div>
<svg class="a" style="left:286px;top:160px;" width="6" height="8" viewBox="0 0 6 8"><path d="M0.5 0 L5.5 4 L0.5 8 Z" fill="#222"/></svg>
<svg class="a" style="left:303px;top:154px;" width="20" height="19" viewBox="0 0 20 19"><rect x="1" y="6" width="6" height="12" rx="2" fill="#222"/><circle cx="4" cy="9" r="1.3" fill="#c33"/><circle cx="4" cy="15" r="1.3" fill="#3a3"/><path d="M7 3 L11 1 L15 3 V9 L11 11 L7 9 Z" fill="#f1c232" stroke="#8a6a00" stroke-width="0.8"/><path d="M10 10 L14 8 L19 10 V16 L14 18.5 L10 16 Z" fill="#f1c232" stroke="#8a6a00" stroke-width="0.8"/></svg>
<div class="t" style="left:327.05px;top:159.7px;font-size:14px;font-weight:normal;color:#111;transform:scaleX(1.0238);transform-origin:0 0;">SWW17 - 60 Tips &nbsp;(D...</div>
<svg class="a" style="left:892px;top:123px;" width="22" height="22" viewBox="0 0 22 22"><path d="M2 17 L9 13 L20 15 L13 20 Z" fill="#6aaad6" stroke="#2f6f9e" stroke-width="0.8"/><path d="M11 16 V3" stroke="#222" stroke-width="1.6"/><path d="M7.5 6 L11 1.5 L14.5 6 Z" fill="#222"/></svg>
<svg class="a" style="left:917px;top:123px;" width="22" height="22" viewBox="0 0 22 22"><circle cx="13" cy="10" r="7" fill="#6aaad6" stroke="#2f6f9e" stroke-width="1.2"/><circle cx="13" cy="10" r="2.5" fill="#f3c84a"/><path d="M2 19 L8 15" stroke="#e0b040" stroke-width="3"/></svg>
<svg class="a" style="left:944px;top:123px;" width="22" height="22" viewBox="0 0 22 22"><circle cx="13" cy="9" r="6.5" fill="#eef3f7" stroke="#555" stroke-width="1.2"/><path d="M2 20 L8 14" stroke="#3f7fb8" stroke-width="3"/></svg>
<svg class="a" style="left:969px;top:123px;" width="22" height="22" viewBox="0 0 22 22"><circle cx="10" cy="11" r="6" fill="#eef3f7" stroke="#555" stroke-width="1.2"/><path d="M2 21 L6 16" stroke="#3f7fb8" stroke-width="3"/><rect x="11" y="1" width="9" height="9" fill="none" stroke="#222" stroke-dasharray="2 1.5"/></svg>
<svg class="a" style="left:995px;top:123px;" width="22" height="22" viewBox="0 0 22 22"><path d="M3 18 L15 4 L20 9 L8 20 Z" fill="#c9c9c9" stroke="#666" stroke-width="1"/><path d="M12 15 H21" stroke="#2f6fb8" stroke-width="2"/></svg>
<svg class="a" style="left:1022px;top:123px;" width="22" height="22" viewBox="0 0 22 22"><path d="M2 8 C2 3 19 3 19 8 V19 H2 Z" fill="#5f8fb8" stroke="#2f4f6e" stroke-width="1"/><path d="M8 9 V19 M13 9 V19" stroke="#ddd" stroke-width="2"/></svg>
<svg class="a" style="left:1047px;top:123px;" width="22" height="22" viewBox="0 0 22 22"><path d="M3 19 L14 4 L20 9 L9 21 Z" fill="#e0c090" stroke="#666"/><path d="M7 6 L12 1 L14 5 Z" fill="#f0a030"/><text x="13" y="21" font-size="11" font-family="Liberation Serif" fill="#2f4f6e">A</text></svg>
<svg class="a" style="left:1073px;top:123px;" width="22" height="22" viewBox="0 0 22 22"><path d="M2 7 L7 2 H20 V15 L15 20 H2 Z" fill="#6aaad6" stroke="#2f4f6e" stroke-width="1"/><path d="M2 7 H15 V20 M15 7 L20 2" fill="none" stroke="#2f4f6e"/></svg>
<svg class="a" style="left:1101px;top:133px;" width="6" height="4" viewBox="0 0 6 4"><path d="M0 0 H6 L3 3.5 Z" fill="#777"/></svg>
<svg class="a" style="left:1114px;top:123px;" width="22" height="22" viewBox="0 0 22 22"><path d="M3 5 L11 2 L19 5 V18 L11 21 L3 18 Z" fill="#e9eef2" stroke="#333" stroke-width="1"/><path d="M3 5 L11 8 V21 L3 18 Z" fill="#4f8fc8"/></svg>
<svg class="a" style="left:1141px;top:133px;" width="6" height="4" viewBox="0 0 6 4"><path d="M0 0 H6 L3 3.5 Z" fill="#777"/></svg>
<svg class="a" style="left:1154px;top:123px;" width="22" height="22" viewBox="0 0 22 22"><ellipse cx="11" cy="11" rx="9" ry="5.5" fill="#bbb" stroke="#666"/><circle cx="11" cy="11" r="3.5" fill="#333"/></svg>
<svg class="a" style="left:1182px;top:133px;" width="6" height="4" viewBox="0 0 6 4"><path d="M0 0 H6 L3 3.5 Z" fill="#777"/></svg>
<svg class="a" style="left:1194px;top:123px;" width="22" height="22" viewBox="0 0 22 22"><circle cx="10" cy="10" r="8" fill="#e6e6e6" stroke="#ccc"/></svg>
<svg class="a" style="left:1219px;top:123px;" width="22" height="22" viewBox="0 0 22 22"><circle cx="11" cy="9" r="8" fill="#2a8a2a"/><path d="M11 9 V1 A8 8 0 0 1 19 9 Z" fill="#e04020"/><path d="M11 9 H3 A8 8 0 0 1 11 1 Z" fill="#2f6fd0"/><path d="M11 9 H19 A8 8 0 0 1 11 17 Z" fill="#f0b040"/><rect x="3" y="16" width="16" height="5" fill="#222"/><path d="M5 16 V21 M9 16 V21 M13 16 V21 M17 16 V21" stroke="#fff" stroke-width="1.2"/></svg>
<svg class="a" style="left:1247px;top:133px;" width="6" height="4" viewBox="0 0 6 4"><path d="M0 0 H6 L3 3.5 Z" fill="#777"/></svg>
<svg class="a" style="left:1259px;top:123px;" width="22" height="22" viewBox="0 0 22 22"><rect x="2" y="3" width="18" height="12" fill="#d8d8d8" stroke="#444" stroke-width="1.4"/><path d="M11 15 V19 M6 20 H16" stroke="#444" stroke-width="1.6"/></svg>
<svg class="a" style="left:1287px;top:133px;" width="6" height="4" viewBox="0 0 6 4"><path d="M0 0 H6 L3 3.5 Z" fill="#777"/></svg>
<svg class="a" style="left:1807px;top:128px;" width="14" height="14" viewBox="0 0 14 14"><rect x="0.5" y="0.5" width="13" height="13" fill="#fff" stroke="#999"/><path d="M5 3.5 L9 7 L5 10.5 Z" fill="#555"/></svg>
<div class="a" style="left:1834px;top:138px;width:11px;height:2px;background:#8a8a8a"></div>
<svg class="a" style="left:1858px;top:128px;" width="14" height="12" viewBox="0 0 14 12"><rect x="0.5" y="3.5" width="9" height="8" fill="none" stroke="#888"/><path d="M3.5 3.5 V0.5 H12.5 V8.5 H9.5" fill="none" stroke="#888"/></svg>
<svg class="a" style="left:1886px;top:129px;" width="12" height="12" viewBox="0 0 12 12"><path d="M1 1 L11 11 M11 1 L1 11" stroke="#888" stroke-width="1.3"/></svg>
<div class="a" style="left:1808px;top:154px;width:14px;height:1px;background:#c8d4e4"></div>
<div class="a" style="left:1808px;top:178px;width:14px;height:1px;background:#c8d4e4"></div>
<svg class="a" style="left:1822px;top:166px;" width="24" height="22" viewBox="0 0 24 22"><path d="M3 12 L10 4 V8 C15 8 19 5 21 2 C20 10 15 14 10 14 V19 Z" fill="#cfd9e4" stroke="#b8c6d6" stroke-width="1"/></svg>
<svg class="a" style="left:1846px;top:184px;" width="25" height="25" viewBox="0 0 25 25"><path d="M4 4 L21 21 M21 4 L4 21" stroke="#f2d2cc" stroke-width="6" stroke-linecap="round"/></svg>
<div class="a" style="left:1911px;top:120px;width:5px;height:916px;background:#ececec"></div>
<div class="a" style="left:1885px;top:178px;width:31px;height:210px;background:#c9c9c9;border:1px solid #8a8a8a;border-right:none;box-sizing:border-box"></div>
<div class="a" style="left:1885px;top:207px;width:31px;height:1px;background:#8a8a8a"></div>
<div class="a" style="left:1885px;top:237px;width:31px;height:1px;background:#8a8a8a"></div>
<div class="a" style="left:1885px;top:267px;width:31px;height:1px;background:#8a8a8a"></div>
<div class="a" style="left:1885px;top:297px;width:31px;height:1px;background:#8a8a8a"></div>
<div class="a" style="left:1885px;top:327px;width:31px;height:1px;background:#8a8a8a"></div>
<div class="a" style="left:1885px;top:357px;width:31px;height:1px;background:#8a8a8a"></div>
<div class="a" style="left:1886px;top:298px;width:30px;height:29px;background:#f7f7f7"></div>
<svg class="a" style="left:1891px;top:182px;" width="21" height="21" viewBox="0 0 21 21"><path d="M2 10 L10.5 2 L19 10" fill="none" stroke="#1d4f7a" stroke-width="2.2"/><path d="M4.5 9 V19 H16.5 V9" fill="#fff" stroke="#1d4f7a" stroke-width="1.8"/><rect x="9" y="12" width="4" height="7" fill="#1d4f7a"/></svg>
<svg class="a" style="left:1891px;top:212px;" width="21" height="21" viewBox="0 0 21 21"><path d="M4 5 L9 3 L17 5 V18 L9 20 L4 18 Z" fill="#eee" stroke="#333" stroke-width="1.2"/><path d="M8 4 V19 M12 4 V19" stroke="#333" stroke-width="1.2"/></svg>
<svg class="a" style="left:1891px;top:242px;" width="21" height="21" viewBox="0 0 21 21"><path d="M2 5 H8 L10 7 H17 V10" fill="#f2f2f2" stroke="#333" stroke-width="1.2"/><path d="M2 18 L5 10 H20 L17 18 Z" fill="#fff" stroke="#333" stroke-width="1.2"/></svg>
<svg class="a" style="left:1891px;top:272px;" width="21" height="21" viewBox="0 0 21 21"><rect x="2" y="3" width="17" height="15" fill="#fff" stroke="#333" stroke-width="1.2"/><path d="M5 6 H11 V9 H8 V15 H13 M13 6 H16 M14 10 V15" fill="none" stroke="#e0a020" stroke-width="2"/></svg>
<svg class="a" style="left:1891px;top:302px;" width="21" height="21" viewBox="0 0 21 21"><circle cx="10.5" cy="10.5" r="8.3" fill="#2a8a2a"/><path d="M10.5 10.5 V2.2 A8.3 8.3 0 0 1 18.8 10.5 Z" fill="#e04020"/><path d="M10.5 10.5 H2.2 A8.3 8.3 0 0 1 10.5 2.2 Z" fill="#2f6fd0"/><path d="M10.5 10.5 H18.8 A8.3 8.3 0 0 1 10.5 18.8 Z" fill="#f0b040"/><circle cx="10.5" cy="10.5" r="8.3" fill="none" stroke="#333" stroke-width="0.8"/><circle cx="7.5" cy="6.5" r="1.8" fill="#cfe6ff"/></svg>
<svg class="a" style="left:1891px;top:333px;" width="21" height="21" viewBox="0 0 21 21"><rect x="2" y="2" width="17" height="17" fill="#fff" stroke="#1d4f7a" stroke-width="1.5"/><rect x="2" y="2" width="17" height="3" fill="#1d4f7a"/><path d="M5 8.5 H7 M9 8.5 H16 M5 12 H7 M9 12 H16 M5 15.5 H7 M9 15.5 H16" stroke="#1d4f7a" stroke-width="1.4"/></svg>
<svg class="a" style="left:1891px;top:362px;" width="21" height="21" viewBox="0 0 21 21"><path d="M2 3 H13 V11 H7 L4 14 V11 H2 Z" fill="#4f9ad8" stroke="#1d4f7a" stroke-width="1"/><path d="M9 8 H19 V16 H17 V19 L14 16 H9 Z" fill="#fff" stroke="#333" stroke-width="1"/></svg>
<div class="a" style="left:282px;top:1036px;width:1634px;height:1px;background:#8e8e8e"></div>
<div class="a" style="left:0px;top:1036px;width:1916px;height:21px;background:#f3f3f3"></div>
<div class="a" style="left:0px;top:1036px;width:1916px;height:1px;background:#8e8e8e"></div>
<div class="a" style="left:0px;top:1056px;width:1916px;height:1px;background:#7e7e7e"></div>
<div class="a" style="left:0px;top:1037px;width:81px;height:19px;background:#7f8391;box-shadow:inset 0 1px 0 #2a2a2a"></div>
<div class="a" style="left:19px;top:1038px;width:1px;height:18px;background:#9ea1ad"></div>
<div class="a" style="left:39px;top:1038px;width:1px;height:18px;background:#9ea1ad"></div>
<div class="a" style="left:59px;top:1038px;width:1px;height:18px;background:#9ea1ad"></div>
<svg class="a" style="left:0px;top:1039px;" width="80" height="15" viewBox="0 0 80 15"><path d="M6.5 1.5 V13" stroke="#5c5f6a" stroke-width="1"/><path d="M13 1.5 L7 7.2 L13 13 Z" fill="#5c5f6a"/><path d="M32.5 1.5 L26 7.2 L32.5 13 Z" fill="#5c5f6a"/><path d="M47 1.5 L53 7.2 L47 13 Z" fill="#5c5f6a"/><path d="M66 1.5 L72 7.2 L66 13 Z" fill="#5c5f6a"/><path d="M72.5 1.5 V13" stroke="#5c5f6a" stroke-width="1"/></svg>
<div class="t" style="left:95.24px;top:1039.0px;font-size:16px;font-weight:bold;color:#111;transform:scaleX(1.0965);transform-origin:0 0;">Model</div>
<div class="a" style="left:156px;top:1037px;width:90px;height:19px;background:#c9c9c9;border:1px solid #8f8f8f;border-top:none;box-sizing:border-box"></div>
<div class="a" style="left:245px;top:1037px;width:145px;height:19px;background:#c9c9c9;border:1px solid #8f8f8f;border-top:none;box-sizing:border-box"></div>
<div class="t" style="left:167.71px;top:1039.4px;font-size:15.5px;font-weight:normal;color:#222;">3D Views</div>
<div class="t" style="left:258.48px;top:1039.4px;font-size:15.5px;font-weight:normal;color:#222;transform:scaleX(1.0378);transform-origin:0 0;">Motion Study 1</div>
<div class="a" style="left:1910px;top:1037px;width:1px;height:19px;background:#9a9a9a"></div>
<div class="a" style="left:0px;top:1057px;width:1916px;height:19px;background:#f3f3f3"></div>
<div class="t" style="left:1276.02px;top:1061.8px;font-size:15px;font-weight:normal;color:#222;transform:scaleX(1.0309);transform-origin:0 0;">-1.03in</div>
<div class="t" style="left:1353.58px;top:1061.8px;font-size:15px;font-weight:normal;color:#222;transform:scaleX(0.9848);transform-origin:0 0;">10.64in</div>
<div class="t" style="left:1420.89px;top:1061.8px;font-size:15px;font-weight:normal;color:#222;transform:scaleX(1.0398);transform-origin:0 0;">0in</div>
<div class="t" style="left:1461.71px;top:1061.8px;font-size:15px;font-weight:normal;color:#222;transform:scaleX(1.0264);transform-origin:0 0;">Under Defined</div>
<div class="a" style="left:1568px;top:1060px;width:1px;height:16px;background:#cfcfcf"></div>
<div class="t" style="left:1577.08px;top:1061.8px;font-size:15px;font-weight:normal;color:#222;transform:scaleX(0.9946);transform-origin:0 0;">Editing Sketch2</div>
<div class="a" style="left:1687px;top:1060px;width:1px;height:16px;background:#cfcfcf"></div>
<svg class="a" style="left:1704px;top:1061px;" width="8" height="15" viewBox="0 0 8 15"><rect x="0.5" y="0.5" width="7" height="14" rx="2" fill="#333"/><circle cx="4" cy="4" r="2" fill="#d33"/></svg>
<div class="a" style="left:1718px;top:1060px;width:1px;height:16px;background:#cfcfcf"></div>
<div class="t" style="left:1767.45px;top:1061.8px;font-size:15px;font-weight:normal;color:#222;transform:scaleX(0.9040);transform-origin:0 0;">IPS</div>
<svg class="a" style="left:1825px;top:1066px;" width="7" height="5" viewBox="0 0 7 5"><path d="M0 4.5 L3.5 0.5 L7 4.5 Z" fill="#333"/></svg>
<svg class="a" style="left:1896px;top:1060px;" width="20" height="16" viewBox="0 0 20 16"><path d="M2 6 L9 2 L18 6 L11 10 Z" fill="#eee" stroke="#444"/><path d="M2 6 V11 L11 15 L18 11 V6" fill="none" stroke="#444"/></svg>
<div class="t" style="left:292.57px;top:1017.3px;font-size:16px;font-weight:bold;color:#111;transform:scaleX(0.9834);transform-origin:0 0;">*Front</div>
<svg class="a" style="left:0;top:0" width="1916" height="1076" viewBox="0 0 1916 1076"><path d="M846.2 481.3 H1364.9 A95.9 95.9 0 0 1 1364.9 673.1 H846.2 A95.9 95.9 0 0 1 846.2 481.3 Z" fill="none" stroke="#1c34c0" stroke-width="2"/><circle cx="846.2" cy="481.3" r="2.6" fill="#1c34c0"/><circle cx="1364.9" cy="481.3" r="2.6" fill="#1c34c0"/><circle cx="846.2" cy="673.1" r="2.6" fill="#1c34c0"/><circle cx="1364.9" cy="673.1" r="2.6" fill="#1c34c0"/><path d="M846.5 577.5 H1365" stroke="#262f78" stroke-width="1.1" stroke-dasharray="19.5 4 4.3 4"/><path d="M843 577.5 H847 M846.5 574 V581 M1362 577.5 H1368 M1364.6 574 V581" stroke="#262f78" stroke-width="1.1"/><path d="M1101.5 573.5 L1109 581 M1109 573.5 L1101.5 581 M1105.3 572.5 V582 M1100.5 577.5 H1110" stroke="#1c2f9a" stroke-width="1"/><rect x="1099" y="585" width="12" height="12" rx="1" fill="#1f9a40" stroke="#17743a" stroke-width="0.8"/><path d="M1101 590.5 H1109 M1101 593.5 H1109" stroke="#111" stroke-width="1.1"/><path d="M942.5 374 V569 M1460.4 374 V569" stroke="#6f9098" stroke-width="1"/><path d="M960 387 H1154 M1206 387 H1443" stroke="#5f7a80" stroke-width="1"/><path d="M943 387 H953 M1450 387 H1460" stroke="#3f92d6" stroke-width="2"/><circle cx="956.6" cy="386.5" r="3.2" fill="#4a86d0" stroke="#0f1f4a" stroke-width="1.2"/><circle cx="1446.6" cy="386.5" r="3.2" fill="#4a86d0" stroke="#0f1f4a" stroke-width="1.2"/><rect x="939.4" y="569.2" width="6.5" height="6.5" fill="#4a8ad8" stroke="#0f1f4a" stroke-width="1.2"/><rect x="1457.2" y="569.2" width="6.5" height="6.5" fill="#4a8ad8" stroke="#0f1f4a" stroke-width="1.2"/><path d="M332 966 V942" stroke="#1f6a2a" stroke-width="3"/><path d="M327 944 L332 932 L337 944 Z" fill="#1f6a2a"/><path d="M334 967 H361" stroke="#d03a20" stroke-width="3"/><path d="M358 962 L370 967 L358 972 Z" fill="#d03a20"/><circle cx="332" cy="967" r="4.5" fill="#1a2a9a"/><text x="328" y="928" font-size="11" font-family="Liberation Sans" fill="#2f6a6a">Y</text><text x="370" y="971" font-size="11" font-family="Liberation Sans" fill="#c04a3a">X</text></svg>
<div class="t" style="left:1159.70px;top:378.3px;font-size:20px;font-weight:normal;color:#3a7cc6;transform:scaleX(1.0481);transform-origin:0 0;">3.50</div>
<svg class="a" style="left:39px;top:934px;" width="15" height="22" viewBox="0 0 15 22"><path d="M1.5 1.5 V17 L5.5 13.2 L8.5 20 L11 19 L8.2 12.3 H13.5 Z" fill="#fff" stroke="#111" stroke-width="1.1" stroke-linejoin="round"/></svg>
<svg class="a" style="left:0;top:0" width="1916" height="1076" viewBox="0 0 1916 1076"><path d="M470 796 V806 C470 811 474 813 478 813 C482 813 484 810 484 806 V800 C484 798 481 798 481 800 V798 C481 796 478 796 478 798 V797 C478 795 475 795 475 797 V790 C475 788 472 788 472 790 V803 L469 800 C467 799 466 801 467 802 Z" fill="#fff" stroke="#111" stroke-width="1"/></svg>
<svg class="a" style="left:0;top:0" width="1916" height="1076" viewBox="0 0 1916 1076"><defs><filter id="sh" x="-20%" y="-20%" width="140%" height="140%"><feGaussianBlur in="SourceAlpha" stdDeviation="2"/><feOffset dx="1" dy="3"/><feComponentTransfer><feFuncA type="linear" slope="0.45"/></feComponentTransfer><feMerge><feMergeNode/><feMergeNode in="SourceGraphic"/></feMerge></filter></defs><g filter="url(#sh)"><path d="M1597 250 L1502 506" stroke="#fd4444" stroke-width="9" stroke-linecap="round"/><path d="M1498.3 516 L1495 483 L1522.5 494.7 Z" fill="#fd4444"/></g><g filter="url(#sh)"><path d="M290 903 L703 648" stroke="#fd4444" stroke-width="9" stroke-linecap="round"/><path d="M714.7 641 L681 645 L696.5 669 Z" fill="#fd4444"/></g><rect x="1433" y="122" width="374" height="130" rx="3" fill="#fd4444" filter="url(#sh)"/></svg>
<div class="t" style="left:1462.14px;top:128.8px;font-size:34.5px;font-weight:normal;color:#fff;transform:scaleX(1.0123);transform-origin:0 0;">Pro Tip: Shift to pick</div>
<div class="t" style="left:1477.05px;top:167.8px;font-size:34.5px;font-weight:normal;color:#fff;">arc conditions with</div>
<div class="t" style="left:1502.56px;top:207.4px;font-size:34.5px;font-weight:normal;color:#fff;transform:scaleX(1.0039);transform-origin:0 0;">smart dimsions</div>
<svg class="a" style="left:0px;top:0px;" width="152" height="34" viewBox="0 0 152 34"><g fill="none" stroke="#cc3a1c" stroke-linecap="round"><path d="M17 4.5 C23 3 31 2.5 33 4.5 C34.5 6.5 31 10 27.5 12.5" stroke-width="2.6"/><path d="M18.5 16.5 L41 11.5" stroke-width="1.4"/><path d="M21 17 L14.5 28.5 C21 26.5 27 23.5 29 20.5" stroke-width="2.6"/><path d="M40.5 11.5 C35 12 30.5 13.5 30.5 16 C30.5 19 39.5 19 39.5 22.5 C39.5 25 33 26 27.5 26" stroke-width="3"/></g><text x="47" y="25.5" font-family="Liberation Sans" font-weight="bold" font-style="italic" font-size="14.5" fill="#c8381a" textLength="46" lengthAdjust="spacingAndGlyphs">SOLID</text><text x="94" y="25.5" font-family="Liberation Sans" font-style="italic" font-size="14.5" fill="#c8381a" textLength="52" lengthAdjust="spacingAndGlyphs">WORKS</text></svg>
<svg class="a" style="left:518px;top:9px;" width="14" height="15" viewBox="0 0 14 15"><path d="M8 1 L13 6 L10 7 L8 11 L3 6 L7 4 Z" fill="#1d5f9e"/><path d="M5 9 L1 14" stroke="#1d5f9e" stroke-width="1.8"/></svg>
<svg class="a" style="left:560px;top:7px;" width="14" height="19" viewBox="0 0 14 19"><path d="M1 1 H9 L13 5 V18 H1 Z" fill="#fff" stroke="#333" stroke-width="1.1"/><path d="M9 1 V5 H13" fill="none" stroke="#333"/></svg>
<svg class="a" style="left:584px;top:16px;" width="7" height="4" viewBox="0 0 7 4"><path d="M0 0 H7 L3.5 3.5 Z" fill="#333"/></svg>
<svg class="a" style="left:597px;top:7px;" width="22" height="19" viewBox="0 0 22 19"><path d="M1 5 H7 L9 7 H16 V17 H1 Z" fill="#e6c86e" stroke="#333" stroke-width="1"/><path d="M1 17 L5 9 H20 L16 17 Z" fill="#f2d98a" stroke="#333"/><path d="M10 1 C15 1 17 4 17 7 M14 5 L17 8 L20 5" fill="none" stroke="#2a9a3a" stroke-width="2"/></svg>
<svg class="a" style="left:623px;top:16px;" width="7" height="4" viewBox="0 0 7 4"><path d="M0 0 H7 L3.5 3.5 Z" fill="#333"/></svg>
<svg class="a" style="left:637px;top:7px;" width="19" height="19" viewBox="0 0 19 19"><rect x="1" y="1" width="17" height="17" rx="1" fill="#1e5f96" stroke="#123a5a"/><rect x="4" y="1.5" width="11" height="7" fill="#e8eef4"/><rect x="5" y="12" width="9" height="6" fill="#123a5a"/></svg>
<svg class="a" style="left:662px;top:16px;" width="7" height="4" viewBox="0 0 7 4"><path d="M0 0 H7 L3.5 3.5 Z" fill="#333"/></svg>
<svg class="a" style="left:675px;top:8px;" width="21" height="18" viewBox="0 0 21 18"><rect x="4" y="1" width="13" height="5" fill="#fff" stroke="#333"/><rect x="1" y="6" width="19" height="8" rx="1" fill="#2a6aa6" stroke="#1a3a5a"/><rect x="4" y="11" width="13" height="6" fill="#fff" stroke="#333"/></svg>
<svg class="a" style="left:701px;top:16px;" width="7" height="4" viewBox="0 0 7 4"><path d="M0 0 H7 L3.5 3.5 Z" fill="#333"/></svg>
<svg class="a" style="left:713px;top:8px;" width="20" height="18" viewBox="0 0 20 18"><path d="M4 8 C7 2 16 2 17 9 C17 14 13 16 10 16" fill="none" stroke="#1d6fb8" stroke-width="2.8"/><path d="M1 3 L2 11 L9 8 Z" fill="#1d6fb8"/></svg>
<svg class="a" style="left:740px;top:16px;" width="7" height="4" viewBox="0 0 7 4"><path d="M0 0 H7 L3.5 3.5 Z" fill="#333"/></svg>
<div class="a" style="left:752px;top:4px;width:37px;height:25px;background:#fafafa;border:1px solid #9a9a9a;box-sizing:border-box"></div>
<div class="a" style="left:753px;top:5px;width:22px;height:23px;background:#8c8c8c"></div>
<svg class="a" style="left:756px;top:8px;" width="15" height="19" viewBox="0 0 15 19"><path d="M2 1 V16 L6 12 L9 18 L11 17 L8 11 H13 Z" fill="#fff" stroke="#111" stroke-width="1.1"/></svg>
<svg class="a" style="left:779px;top:16px;" width="7" height="4" viewBox="0 0 7 4"><path d="M0 0 H7 L3.5 3.5 Z" fill="#333"/></svg>
<svg class="a" style="left:797px;top:8px;" width="12" height="18" viewBox="0 0 12 18"><rect x="1" y="1" width="10" height="16" rx="4" fill="#222"/><circle cx="6" cy="6" r="2.6" fill="#d8321e"/><circle cx="6" cy="12" r="2" fill="#333"/></svg>
<svg class="a" style="left:819px;top:8px;" width="19" height="17" viewBox="0 0 19 17"><rect x="1" y="1" width="17" height="15" fill="#fff" stroke="#1e3f5e" stroke-width="1.3"/><path d="M4 5 H6 M8 5 H15 M4 8.5 H6 M8 8.5 H15 M4 12 H6 M8 12 H15" stroke="#1e3f5e" stroke-width="1.6"/></svg>
<svg class="a" style="left:845px;top:8px;" width="18" height="18" viewBox="0 0 18 18"><circle cx="9" cy="9" r="5" fill="none" stroke="#444" stroke-width="2.2"/><circle cx="9" cy="9" r="7.5" fill="none" stroke="#444" stroke-width="2" stroke-dasharray="2.6 3"/><circle cx="9" cy="9" r="2" fill="none" stroke="#444" stroke-width="1"/></svg>
<svg class="a" style="left:870px;top:16px;" width="7" height="4" viewBox="0 0 7 4"><path d="M0 0 H7 L3.5 3.5 Z" fill="#333"/></svg>
<svg class="a" style="left:1551px;top:8px;" width="16" height="16" viewBox="0 0 16 16"><rect x="0.5" y="0.5" width="15" height="15" fill="#222"/><rect x="1.5" y="1.5" width="13" height="13" fill="#222" stroke="#ddd" stroke-width="0.6"/><path d="M4 4 L8 7.5 L4 11 M8 12 H12" fill="none" stroke="#fff" stroke-width="1.3"/></svg>
<svg class="a" style="left:1754px;top:4px;" width="26" height="26" viewBox="0 0 26 26"><circle cx="10.5" cy="10.5" r="8" fill="none" stroke="#333" stroke-width="2.2"/><path d="M16.5 16.5 L23 23" stroke="#333" stroke-width="2.8" stroke-linecap="round"/></svg>
<svg class="a" style="left:1785px;top:16px;" width="7" height="4" viewBox="0 0 7 4"><path d="M0 0 H7 L3.5 3.5 Z" fill="#333"/></svg>
<div class="t" style="left:1807.0px;top:8.6px;font-size:17px;font-weight:bold;color:#222;">?</div>
<svg class="a" style="left:1829px;top:16px;" width="7" height="4" viewBox="0 0 7 4"><path d="M0 0 H7 L3.5 3.5 Z" fill="#333"/></svg>
<div class="a" style="left:1848px;top:20px;width:11px;height:3px;background:#333"></div>
<svg class="a" style="left:1871px;top:9px;" width="15" height="14" viewBox="0 0 15 14"><rect x="1" y="4.5" width="9" height="8" fill="none" stroke="#333" stroke-width="1.6"/><path d="M4 4.5 V1 H13.5 V9 H10" fill="none" stroke="#333" stroke-width="1.6"/></svg>
<svg class="a" style="left:1898px;top:10px;" width="13" height="13" viewBox="0 0 13 13"><path d="M1 1 L12 12 M12 1 L1 12" stroke="#333" stroke-width="1.8"/></svg>
<svg class="a" style="left:8px;top:173px;" width="22" height="19" viewBox="0 0 22 19"><path d="M2 10 L8 6.5 L11 8 V4 L15 1.5 L20 4.5 V12 L13 17 L2 12.5 Z" fill="#f2c040" stroke="#7a5800" stroke-width="1"/><path d="M2 10 L13 14.5 L20 10 M13 14.5 V17 M11 8 L15 5.5 L20 8.5 M11 8 L8 9.7 M15 1.5 V5.5" fill="none" stroke="#7a5800" stroke-width="0.9"/><path d="M13 14.5 L20 10 V12 L13 17 Z" fill="#c8901a"/></svg>
<svg class="a" style="left:48px;top:173px;" width="19" height="19" viewBox="0 0 19 19"><rect x="1" y="1" width="17" height="17" fill="#fff" stroke="#1e4f7a" stroke-width="1.3"/><rect x="1" y="1" width="17" height="3" fill="#1e4f7a"/><path d="M3.5 7.5 H6 M8 7.5 H16 M3.5 11 H6 M8 11 H16 M3.5 14.5 H6 M8 14.5 H16" stroke="#1e4f7a" stroke-width="1.5"/></svg>
<svg class="a" style="left:90px;top:173px;" width="16" height="19" viewBox="0 0 16 19"><path d="M2.5 1 V18 M2.5 4.5 H7 M2.5 13.5 H7" fill="none" stroke="#222" stroke-width="1.6"/><path d="M6 1 H10 V3" fill="none" stroke="#222" stroke-width="1"/><rect x="8.5" y="3.5" width="6" height="6" fill="#fff" stroke="#222" stroke-width="1.1"/><rect x="8.5" y="11" width="6" height="6" fill="#fff" stroke="#222" stroke-width="1.1"/><path d="M6 9 H9" stroke="#222"/></svg>
<svg class="a" style="left:128px;top:173px;" width="19" height="19" viewBox="0 0 19 19"><circle cx="9.5" cy="9.5" r="6.5" fill="none" stroke="#111" stroke-width="2"/><path d="M9.5 0.5 V18.5 M0.5 9.5 H18.5" stroke="#111" stroke-width="2"/></svg>
<svg class="a" style="left:168px;top:173px;" width="19" height="19" viewBox="0 0 19 19"><path d="M9.5 9.5 L2.14 13.75 A8.5 8.5 0 0 1 5.25 2.14 Z" fill="#2f6fd0"/><path d="M9.5 9.5 L5.25 2.14 A8.5 8.5 0 0 1 13.75 2.14 Z" fill="#e04020"/><path d="M9.5 9.5 L13.75 2.14 A8.5 8.5 0 0 1 18.00 9.50 Z" fill="#151515"/><path d="M9.5 9.5 L18.00 9.50 A8.5 8.5 0 0 1 9.50 18.00 Z" fill="#f0b030"/><path d="M9.5 9.5 L9.50 18.00 A8.5 8.5 0 0 1 2.14 13.75 Z" fill="#2a9a3a"/><circle cx="9.5" cy="9.5" r="8.5" fill="none" stroke="#553" stroke-width="0.8"/><circle cx="6.5" cy="6" r="1.6" fill="#fff" opacity="0.7"/></svg>
</body></html>
